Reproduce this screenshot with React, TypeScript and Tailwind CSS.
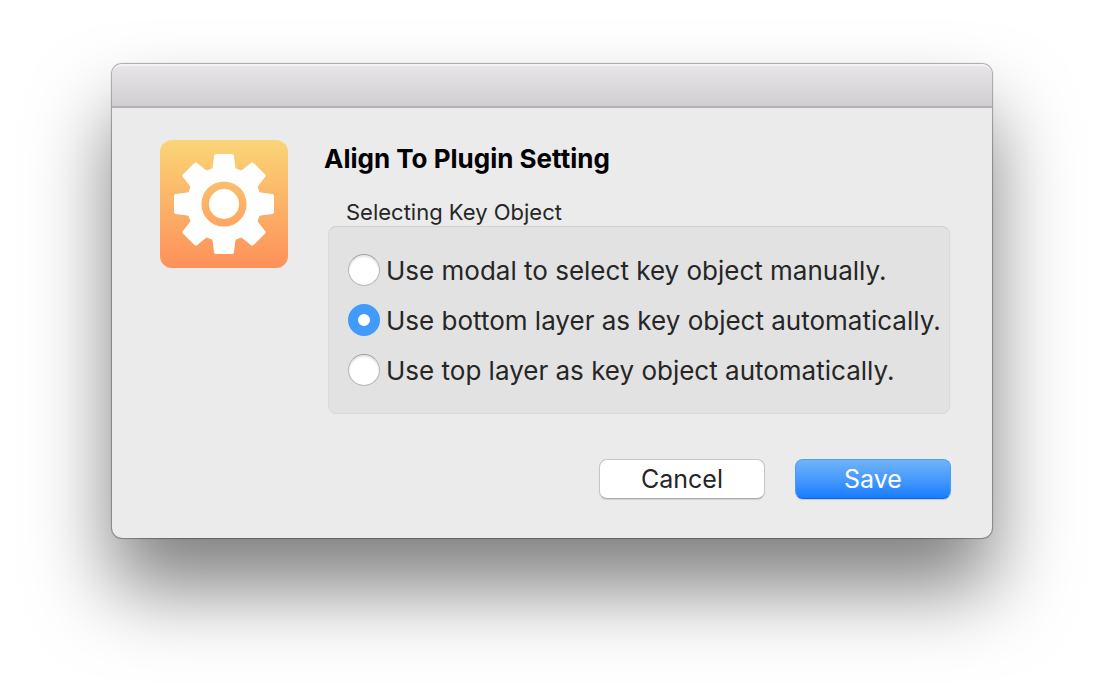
import { useState } from "react";

const options = [
  { value: "modal", label: "Use modal to select key object manually." },
  { value: "bottom", label: "Use bottom layer as key object automatically." },
  { value: "top", label: "Use top layer as key object automatically." },
];

const teeth = [0, 45, 90, 135, 180, 225, 270, 315];

function GearIcon() {
  return (
    <svg className="size-32 shrink-0" viewBox="0 0 128 128" aria-hidden="true">
      <defs>
        <linearGradient id="sunset" gradientUnits="userSpaceOnUse" x1="0" y1="0" x2="0" y2="128">
          <stop offset="0" stopColor="#fad576" />
          <stop offset="1" stopColor="#fe9059" />
        </linearGradient>
      </defs>
      <rect width="128" height="128" rx="12" fill="url(#sunset)" />
      <g transform="translate(64 64)" fill="#fff">
        <circle r="37.5" />
        {teeth.map((angle) => (
          <path
            key={angle}
            transform={`rotate(${angle})`}
            d="M-13 -34 L-11.4 -36.5 L-9.9 -48.4 Q-9.6 -50 -7.8 -50 H7.8 Q9.6 -50 9.9 -48.4 L11.4 -36.5 L13 -34Z"
          />
        ))}
      </g>
      <circle cx="64" cy="64" r="18.8" fill="none" stroke="url(#sunset)" strokeWidth="7.6" />
    </svg>
  );
}

export default function App() {
  const [selected, setSelected] = useState("bottom");

  return (
    <main className="min-h-screen overflow-hidden bg-white px-28 py-16 font-['Inter',sans-serif] text-[#262626]">
      <section
        role="dialog"
        aria-labelledby="title"
        className="rounded-[10px] bg-[#ebebeb] shadow-[0_0_1px_1px_rgba(0,0,0,0.32),0_50px_80px_rgba(0,0,0,0.5)]"
      >
        <header className="h-11 rounded-t-[10px] border-t-2 border-b-2 border-t-[#f4f3f4] border-b-[#b4b1b4] bg-linear-to-b from-[#e7e5e7] to-[#d1ced1]" />
        <form className="flex items-start gap-9 pt-8 pr-[41px] pb-[39px] pl-12" onSubmit={(e) => e.preventDefault()}>
          <GearIcon />
          <div className="min-w-0 flex-1">
            <h1 id="title" className="text-[26px] leading-[38px] font-bold text-black">
              Align To Plugin Setting
            </h1>
            <fieldset className="mt-5 mr-px ml-1 min-w-0">
              <legend className="pl-[18px] text-[22px] leading-7">Selecting Key Object</legend>
              <div className="flex flex-col gap-4 rounded-lg border border-[#dadada] border-t-[#d0d0d0] bg-[#e2e2e2] pt-[27px] pr-2 pb-[25px] pl-[19px]">
                {options.map((option) => (
                  <label key={option.value} className="flex items-start gap-[6px] text-[26px] leading-[34px] whitespace-nowrap">
                    <input
                      type="radio"
                      name="key-object"
                      value={option.value}
                      checked={selected === option.value}
                      onChange={() => setSelected(option.value)}
                      className="size-8 shrink-0 appearance-none rounded-full border border-[#b8b8b8] border-t-[#9c9c9c] bg-white shadow-[inset_0_2px_2px_rgba(0,0,0,0.1)] checked:border-10 checked:border-[#409bfb] checked:shadow-none"
                    />
                    {option.label}
                  </label>
                ))}
              </div>
            </fieldset>
            <div className="mt-[45px] flex justify-end gap-[30px]">
              <button
                type="button"
                className="h-10 w-[166px] rounded-lg border border-[#c6c6c6] border-b-[#ababab] bg-white text-[25px] leading-8 shadow-[0_1px_1px_rgba(0,0,0,0.12)]"
              >
                Cancel
              </button>
              <button
                type="submit"
                className="h-10 w-[156px] rounded-lg border border-[#4a9df2] border-b-[#0f62f5] bg-linear-to-b from-[#6fb4f9] to-[#157cff] text-[25px] leading-8 text-white shadow-[0_1px_1px_rgba(0,0,0,0.15)]"
              >
                Save
              </button>
            </div>
          </div>
        </form>
      </section>
    </main>
  );
}
